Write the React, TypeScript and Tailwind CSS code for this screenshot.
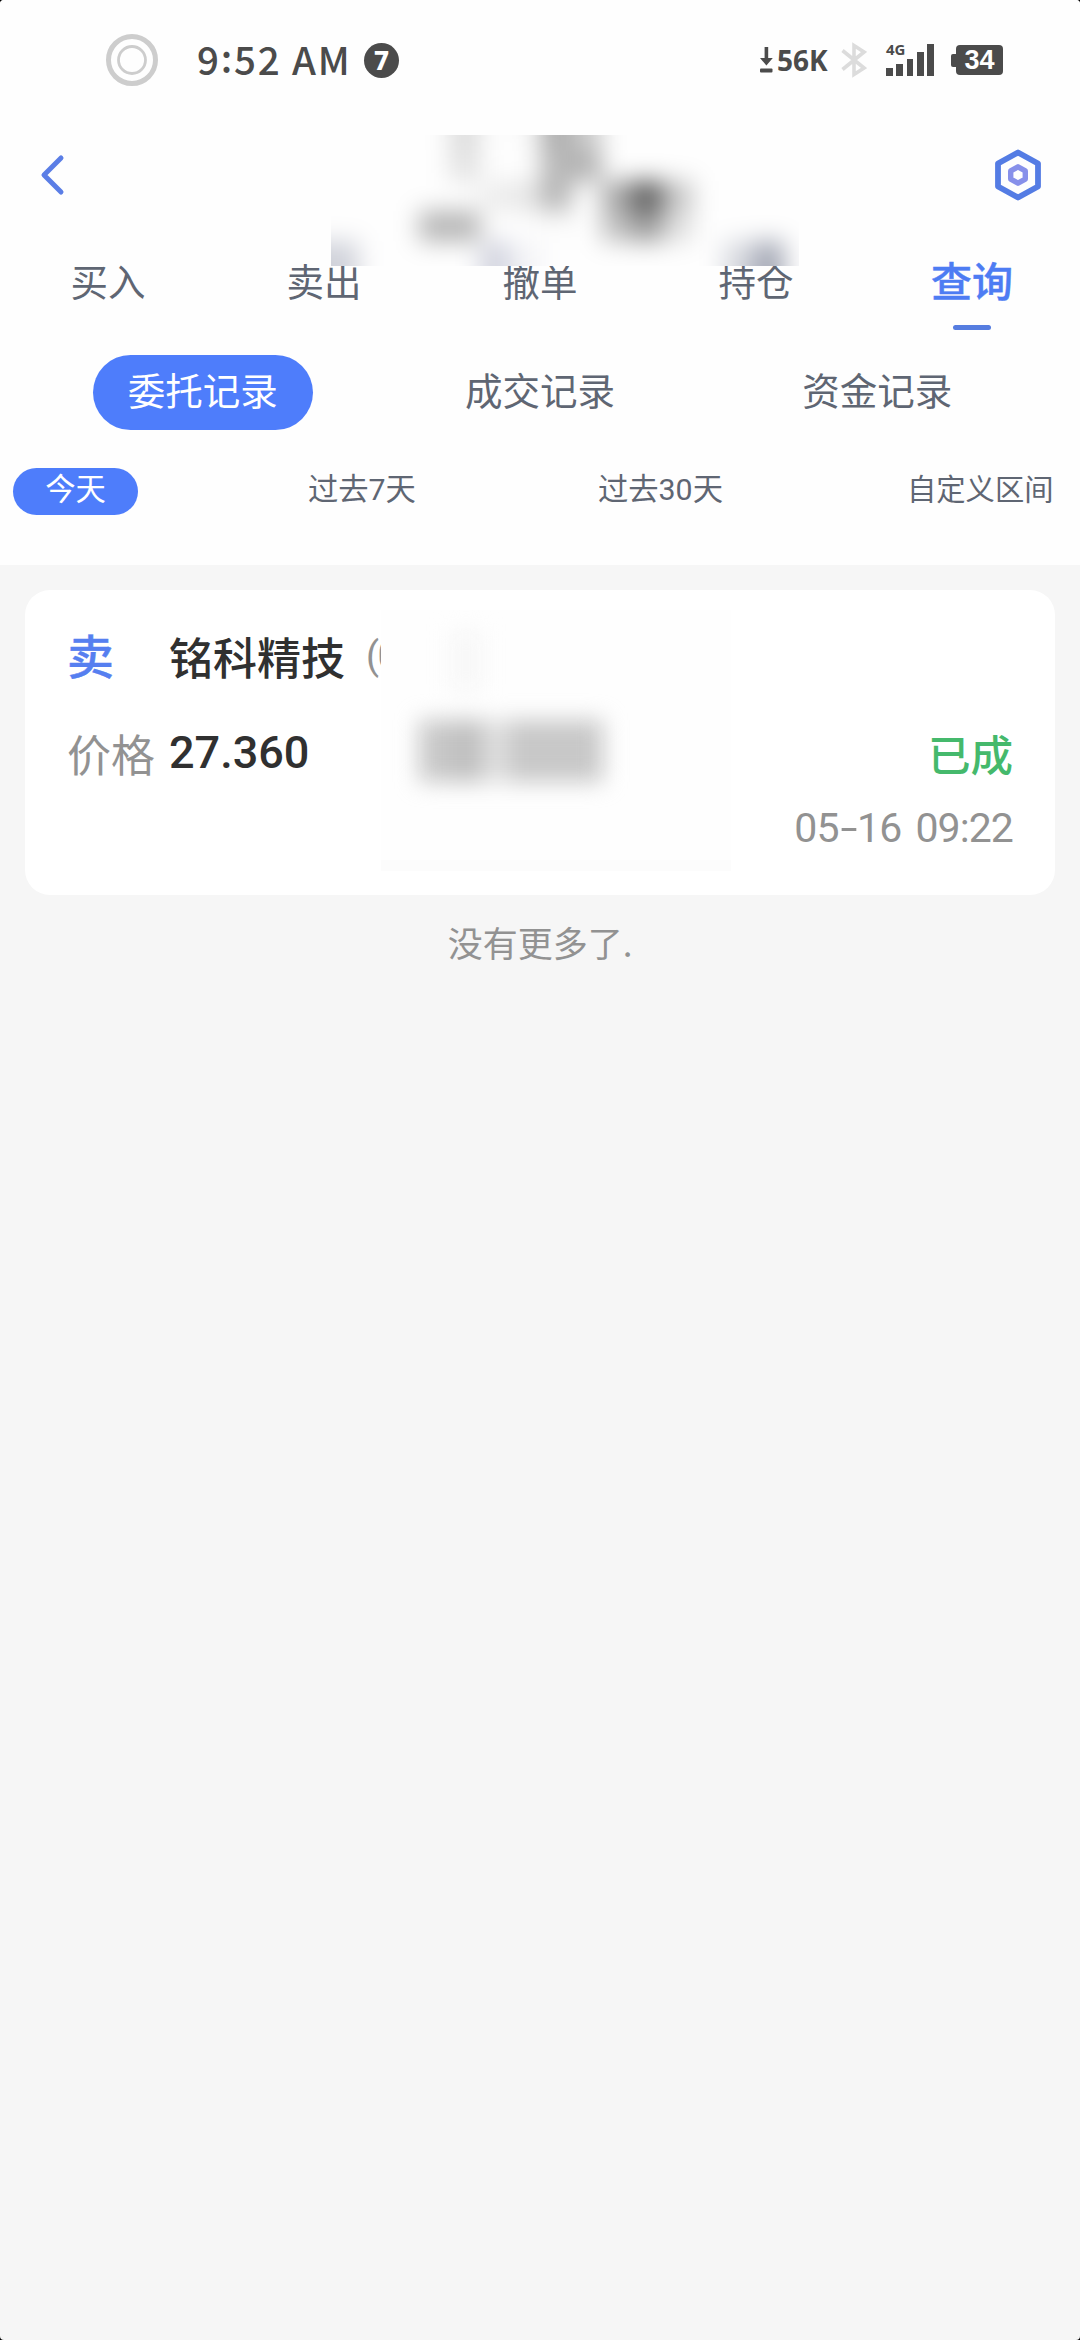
import clsx from "clsx";

const TABS = ["买入", "卖出", "撤单", "持仓", "查询"];
const RECORDS = ["委托记录", "成交记录", "资金记录"];

// [column, row, fill] for the masked account name, 30.4 x 30.2 cells
const HEADER_CELLS: [number, number, string][] = [
[4, 0, "#dcdcdc"],
[6, 0, "#fafafa"],
[7, 0, "#acacac"],
[8, 0, "#cbcbcb"],
[4, 1, "#e2e2e2"],
[7, 1, "#b8b8b8"],
[8, 1, "#b0b0b0"],
[5, 2, "#ededed"],
[6, 2, "#e6e6e6"],
[7, 2, "#b4b4b4"],
[9, 2, "#a8a8a8"],
[10, 2, "#5c5c5c"],
[11, 2, "#c6c6c6"],
[3, 3, "#b4b4b4"],
[4, 3, "#b4b4b4"],
[7, 3, "#fbfbfb"],
[9, 3, "#bebebe"],
[10, 3, "#9a9a9a"],
[11, 3, "#dedede"],
[0, 4, "#d0d2da"],
[5, 4, "#d2d4df"],
[6, 4, "#f4f4f7"],
[13, 4, "#d8dae0"],
[14, 4, "#a4a8b5"],
];

function HeaderMask() {
return (
<svg
className="absolute left-[331px] top-[135px] z-10"
width="468"
height="131"
viewBox="331 135 468 131"
>
<defs>
<filter id="soft" filterUnits="userSpaceOnUse" x="280" y="80" width="580" height="260" colorInterpolationFilters="sRGB">
<feGaussianBlur stdDeviation="12" />
</filter>
</defs>
<rect x="331" y="135" width="468" height="131" fill="#fefefe" />
<g filter="url(#soft)">
<rect x="280" y="80" width="580" height="260" fill="#fefefe" />
{HEADER_CELLS.map(([c, r, fill]) => {
const x = 328 + c * 30.4;
const y = 120.5 + r * 30.2;
// edge cells run past the box so the blur does not fade there
return (
<rect
key={`${c}-${r}`}
x={c === 0 ? x - 30 : x}
y={r === 0 ? y - 40 : y}
width={c === 0 ? 60.4 : 30.5}
height={r === 0 ? 70.2 : r === 4 ? 70 : 30.3}
fill={fill}
/>
);
})}
</g>
</svg>
);
}

function CardMask() {
return (
<svg
className="absolute left-[356px] top-[20px]"
width="350"
height="261"
viewBox="381 610 350 261"
>
<defs>
<filter id="softCard" filterUnits="userSpaceOnUse" x="381" y="600" width="350" height="271" colorInterpolationFilters="sRGB">
<feGaussianBlur stdDeviation="11" />
</filter>
</defs>
<rect x="381" y="610" width="350" height="261" fill="#fefefe" />
<rect x="381" y="860" width="350" height="11" fill="#fcfcfc" />
<g filter="url(#softCard)">
<rect x="451" y="631" width="30" height="60" fill="#f7f7f7" />
<rect x="419" y="720" width="184" height="62" fill="#c8c8c8" />
<rect x="451" y="720" width="30" height="62" fill="#c0c0c0" />
<rect x="484" y="720" width="24" height="62" fill="#e0e0e0" />
</g>
</svg>
);
}

function StatusBar() {
return (
<div className="flex h-[120px] items-center text-[#4b4b4b]">
<svg className="ml-[105px]" width="54" height="54" viewBox="0 0 54 54" fill="none" stroke="#cdcdcd">
<circle cx="27" cy="27" r="23.5" strokeWidth="5" />
<circle cx="27" cy="27" r="13.5" strokeWidth="2.8" />
</svg>
<span className="ml-[38px] w-[152px] whitespace-nowrap pb-[4px] text-[38.500px] font-medium leading-none tracking-[1.800px]">
9<span className="relative -top-[2px]">:</span>52 AM
</span>
<span className="ml-[15px] flex size-[35px] items-center justify-center rounded-full bg-[#4b4b4b] pb-[1px] font-['Noto_Sans'] text-[26px] font-extrabold leading-none text-white">
7
</span>
<svg className="ml-[361px]" width="13" height="26" viewBox="0 0 13 26" fill="currentColor">
<path d="M4.6 0h3.6v11h4.6L6.4 18.500 0 11h4.600z" />
<rect y="21.500" width="12.500" height="4" rx="1" />
</svg>
<span className="ml-[4px] w-[54px] font-['Noto_Sans'] text-[28px] font-bold leading-none">56K</span>
<svg className="ml-[10px]" width="26" height="36" viewBox="0 0 26 36" fill="none" stroke="#dcdcdc" strokeWidth="3.600">
<path d="M1.500 8.500 23 26 13 32.500V3.500L23 10 1.500 27.500" />
</svg>
<div className="relative ml-[19px] flex h-[32px] w-[48px] items-end gap-[3.400px]">
<span className="absolute -top-[2px] left-0 font-['Noto_Sans'] text-[15px] font-bold leading-none">4G</span>
<i className="h-[8px] w-[7px] bg-[#4b4b4b]" />
<i className="h-[12px] w-[7px] bg-[#4b4b4b]" />
<i className="h-[17px] w-[7px] bg-[#4b4b4b]" />
<i className="h-[24px] w-[7px] bg-[#4b4b4b]" />
<i className="h-[32px] w-[7px] bg-[#4b4b4b]" />
</div>
<i className="ml-[17px] h-[13px] w-[5px] rounded-l-[2px] bg-[#4b4b4b]" />
<span className="flex h-[30px] w-[47px] items-center justify-center rounded-[4px] bg-[#4b4b4b] font-['Liberation_Sans'] text-[27px] font-bold leading-none text-white">
34
</span>
</div>
);
}

export default function App() {
return (
<div className="h-[2340px] w-[1080px] bg-black">
<main className="relative h-full overflow-hidden rounded-[4px] bg-[#f6f6f6] font-['Noto_Sans_CJK_SC',sans-serif] text-[#5f6673]">
<header className="h-[565px] bg-[#fefefe]">
<StatusBar />

<div className="flex h-[109px] items-center justify-between pl-[40px] pr-[37px]">
<svg width="26" height="44" viewBox="0 0 26 44" fill="none" stroke="#5b7ee6" strokeWidth="5" strokeLinecap="round" strokeLinejoin="round">
<path d="M21 5 4 22l17 17" />
</svg>
<svg width="50" height="56" viewBox="0 0 50 56" fill="none" strokeLinejoin="round">
<path d="M25 5.500 45 16.500v23L25 50.500 5 39.500v-23z" stroke="#547ce4" strokeWidth="5.800" />
<path d="M25 19.800 32.300 23.900v8.200L25 36.200l-7.300-4.100v-8.200z" stroke="#8790ea" strokeWidth="5.400" />
</svg>
</div>

<nav className="grid h-[101px] grid-cols-5">
{TABS.map((tab) => {
const active = tab === "查询";
return (
<div key={tab} className="flex flex-col items-center">
<span
className={clsx(
"h-[96px] leading-[101px]",
active ? "text-[41px] font-medium text-[#4d7cf3] [-webkit-text-stroke:0.4px_#4d7cf3]" : "text-[37.5px]"
)}
>
{tab}
</span>
{active && <i className="h-[5px] w-[38px] shrink-0 rounded-full bg-[#567de0]" />}
</div>
);
})}
</nav>

<div className="mt-[25px] grid h-[75px] grid-cols-3 px-[34px]">
{RECORDS.map((name, i) => (
<div
key={name}
className={clsx(
"flex h-[75px] w-[220px] items-center justify-center justify-self-center rounded-full pb-[6px] text-[37.5px]",
i === 0 && "bg-[#4e7dfb] text-white"
)}
>
{name}
</div>
))}
</div>

<div className="mt-[38px] flex h-[47px] items-center pl-[13px] font-['Roboto','Noto_Sans_CJK_SC',sans-serif] text-[30.300px] leading-none">
<span className="flex h-[47px] w-[125px] items-center justify-center rounded-full bg-[#4e7dfb] pb-[2px] text-white">今天</span>
<span className="ml-[170px] w-[108px] whitespace-nowrap pb-[2px]">过去7天</span>
<span className="ml-[182px] w-[125px] whitespace-nowrap pb-[2px]">过去30天</span>
<span className="ml-[184px] whitespace-nowrap pb-[2px] text-[29.300px]">自定义区间</span>
</div>
</header>

<section className="relative mx-[25px] mt-[25px] h-[305px] rounded-[25px] bg-white px-[42px] pt-[34px]">
<div className="flex h-[64px] items-center">
<span className="w-[102px] pb-[4px] text-[47px] font-medium text-[#567ff0] [-webkit-text-stroke:0.4px_#567ff0]">卖</span>
<span className="text-[44px] font-medium text-[#303030]">铭科精技</span>
<span className="ml-[21px] font-['Roboto'] text-[38px] tracking-[-1.500px] text-[#929292]">(0</span>
</div>
<div className="mt-[33px] flex h-[64px] items-center">
<span className="w-[102px] text-[44px] text-[#929292]">价格</span>
<span className="font-['Roboto'] text-[45px] font-medium text-[#303030]">27.360</span>
<span className="ml-auto text-[42.500px] font-medium text-[#45b96c]">已成</span>
</div>
<div className="mt-[17px] flex h-[54px] items-center justify-end font-['Roboto'] text-[41px] tracking-[-0.900px] text-[#929292]">
<span>05</span>
<span className="mx-[4px] inline-block scale-x-150">-</span>
<span>16</span>
<span className="ml-[14px]">09:22</span>
</div>
<CardMask />
</section>

<p className="mt-[21px] text-center text-[35px] leading-[52px] text-[#929292]">没有更多了.</p>

<HeaderMask />
</main>
</div>
);
}
